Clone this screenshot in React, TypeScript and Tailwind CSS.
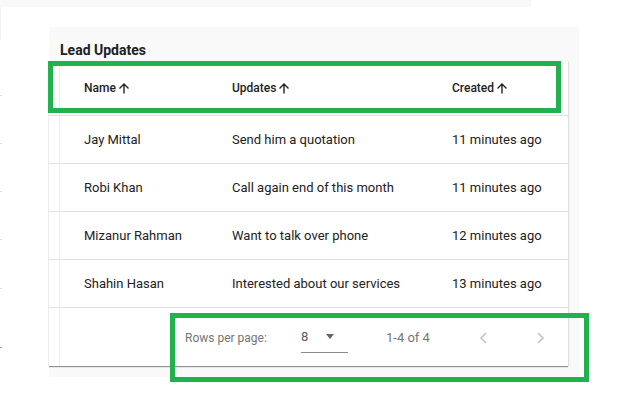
import React from 'react';

const rows = [
  { name: 'Jay Mittal', update: 'Send him a quotation', created: '11 minutes ago' },
  { name: 'Robi Khan', update: 'Call again end of this month', created: '11 minutes ago' },
  { name: 'Mizanur Rahman', update: 'Want to talk over phone', created: '12 minutes ago' },
  { name: 'Shahin Hasan', update: 'Interested about our services', created: '13 minutes ago' },
];

function SortArrow() {
  return (
    <svg width="12" height="11" viewBox="0 0 12 11" className="ml-[2px] text-[#222]">
      <path d="M6 10.5V1.2M1.5 5.6L6 1.1l4.5 4.5" fill="none" stroke="currentColor" strokeWidth="1.4" />
    </svg>
  );
}

function Chevron({ dir }: { dir: 'left' | 'right' }) {
  return (
    <svg width="10" height="12" viewBox="0 0 10 12" className="text-[#c4c4c4]">
      <path
        d={dir === 'left' ? 'M8 1L3 6l5 5' : 'M2 1l5 5-5 5'}
        fill="none"
        stroke="currentColor"
        strokeWidth="1.6"
      />
    </svg>
  );
}

export default function App() {
  return (
    <div className="relative w-[629px] h-[418px] bg-white overflow-hidden" style={{ fontFamily: 'Roboto, "Liberation Sans", sans-serif' }}>
      {/* page top strip */}
      <div className="h-[7px] w-[531px] bg-[#f8f8f8]" />

      {/* edge of neighbouring panel */}
      <div className="absolute left-0 top-[7px] w-[1px] h-[33px] bg-[#f3f3f3]" />
      {[95, 143, 191, 239, 288].map((y) => (
        <div key={y} className="absolute left-0 w-[2px] h-[1px] bg-[#dddddd]" style={{ top: y }} />
      ))}
      <div className="absolute left-0 top-[347px] w-[2px] h-[1px] bg-[#9e9e9e]" />

      {/* card */}
      <div className="ml-[49px] mt-[20px] w-[530px] h-[350px] bg-[#f9f9f9]">
        <div className="h-[34px] pl-[11px] pt-[13px]">
          <h2 className="text-[14px] leading-[20px] font-bold text-[#212121]">Lead Updates</h2>
        </div>

        <div className="relative w-[519px] bg-white shadow-[0_1px_1px_rgba(0,0,0,0.4),1px_0_2px_rgba(0,0,0,0.06)]">
          <div className="absolute left-[10px] top-0 bottom-0 w-[1px] bg-[#efefef]" />

          {/* header */}
          <div className="flex items-center h-[55px] pl-[35px] border-b border-[#e0e0e0] text-[12px] font-medium text-[#222]">
            <div className="w-[148px] flex items-center">Name<SortArrow /></div>
            <div className="w-[220px] flex items-center">Updates<SortArrow /></div>
            <div className="flex-1 flex items-center">Created<SortArrow /></div>
          </div>

          {/* body */}
          {rows.map((r) => (
            <div key={r.name} className="flex items-center h-[48px] pl-[35px] border-b border-[#e0e0e0] text-[13px] text-[#222]">
              <div className="w-[148px]">{r.name}</div>
              <div className="w-[220px]">{r.update}</div>
              <div className="flex-1">{r.created}</div>
            </div>
          ))}

          {/* pagination */}
          <div className="flex items-center h-[58px] pl-[136px] pt-[2px] text-[12px] text-[#757575]">
            <span className="w-[116px]">Rows per page:</span>
            <div className="w-[47px] h-[30px] flex items-center justify-between border-b border-[#8c8c8c] text-[13px] text-[#5c5a58]">
              <span className="-mt-[2px]">8</span>
              <span className="mr-[14px] w-0 h-0 border-l-[4px] border-r-[4px] border-t-[5px] border-l-transparent border-r-transparent border-t-[#666] -mt-[2px]" />
            </div>
            <span className="ml-[38px] text-[13px] text-[#757575]">1-4 of 4</span>
            <div className="ml-[48px] flex items-center gap-[48px]">
              <Chevron dir="left" />
              <Chevron dir="right" />
            </div>
          </div>
        </div>
      </div>

      {/* annotation boxes */}
      <div className="absolute left-[48px] top-[61px] w-[513px] h-[52px] border-[5px] border-[#22b14c]" />
      <div className="absolute left-[170px] top-[313px] w-[419px] h-[69px] border-[5px] border-[#22b14c]" />
    </div>
  );
}
